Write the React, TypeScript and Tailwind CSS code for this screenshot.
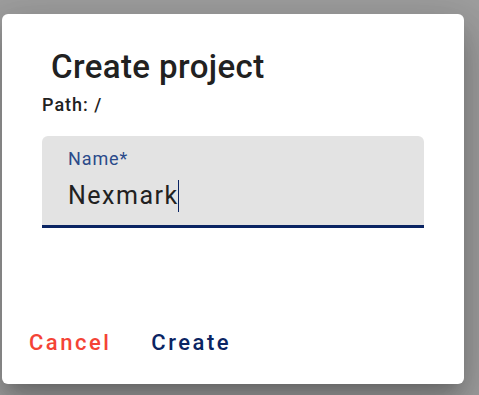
import React from "react";

export default function App() {
  return (
    <div className="w-[479px] h-[395px] bg-[#9e9e9e] overflow-hidden" style={{ fontFamily: "Roboto, sans-serif" }}>
      <div className="ml-[2px] mt-[14px] w-[462px] h-[370px] bg-white rounded-[6px] shadow-[0_11px_15px_-7px_rgba(0,0,0,0.2),0_24px_38px_3px_rgba(0,0,0,0.14),0_9px_46px_8px_rgba(0,0,0,0.12)] flex flex-col">
        <div className="pl-[49px] pt-[33px] text-[33px] leading-[40px] font-medium tracking-[0.4px] text-[#212121]">Create project</div>
        <div className="pl-[40px] mt-[7px] text-[18px] leading-[22px] font-medium tracking-[1px] text-[#212121]">Path: /</div>
        <div className="ml-[40px] mt-[20px] w-[382px] h-[92px] bg-[#e3e3e3] rounded-t-[6px] border-b-[3px] border-[#0a2463] flex flex-col pl-[26px] pt-[12px]">
          <div className="text-[18px] leading-[22px] text-[#2a4a8a] tracking-[0.9px]">Name*</div>
          <div className="mt-[10px] flex items-center text-[25px] leading-[32px] text-[#212121] tracking-[1.5px]">
            <span>Nexmark</span>
            <span className="inline-block w-[1px] h-[32px] bg-[#0a2463] -ml-[1px]" />
          </div>
        </div>
        <div className="mt-auto mb-[28px] flex items-center pl-[27px] gap-[40px] text-[22px] leading-[26px] font-medium tracking-[2.5px]">
          <span className="text-[#f44336]">Cancel</span>
          <span className="text-[#0a2463]">Create</span>
        </div>
      </div>
    </div>
  );
}
